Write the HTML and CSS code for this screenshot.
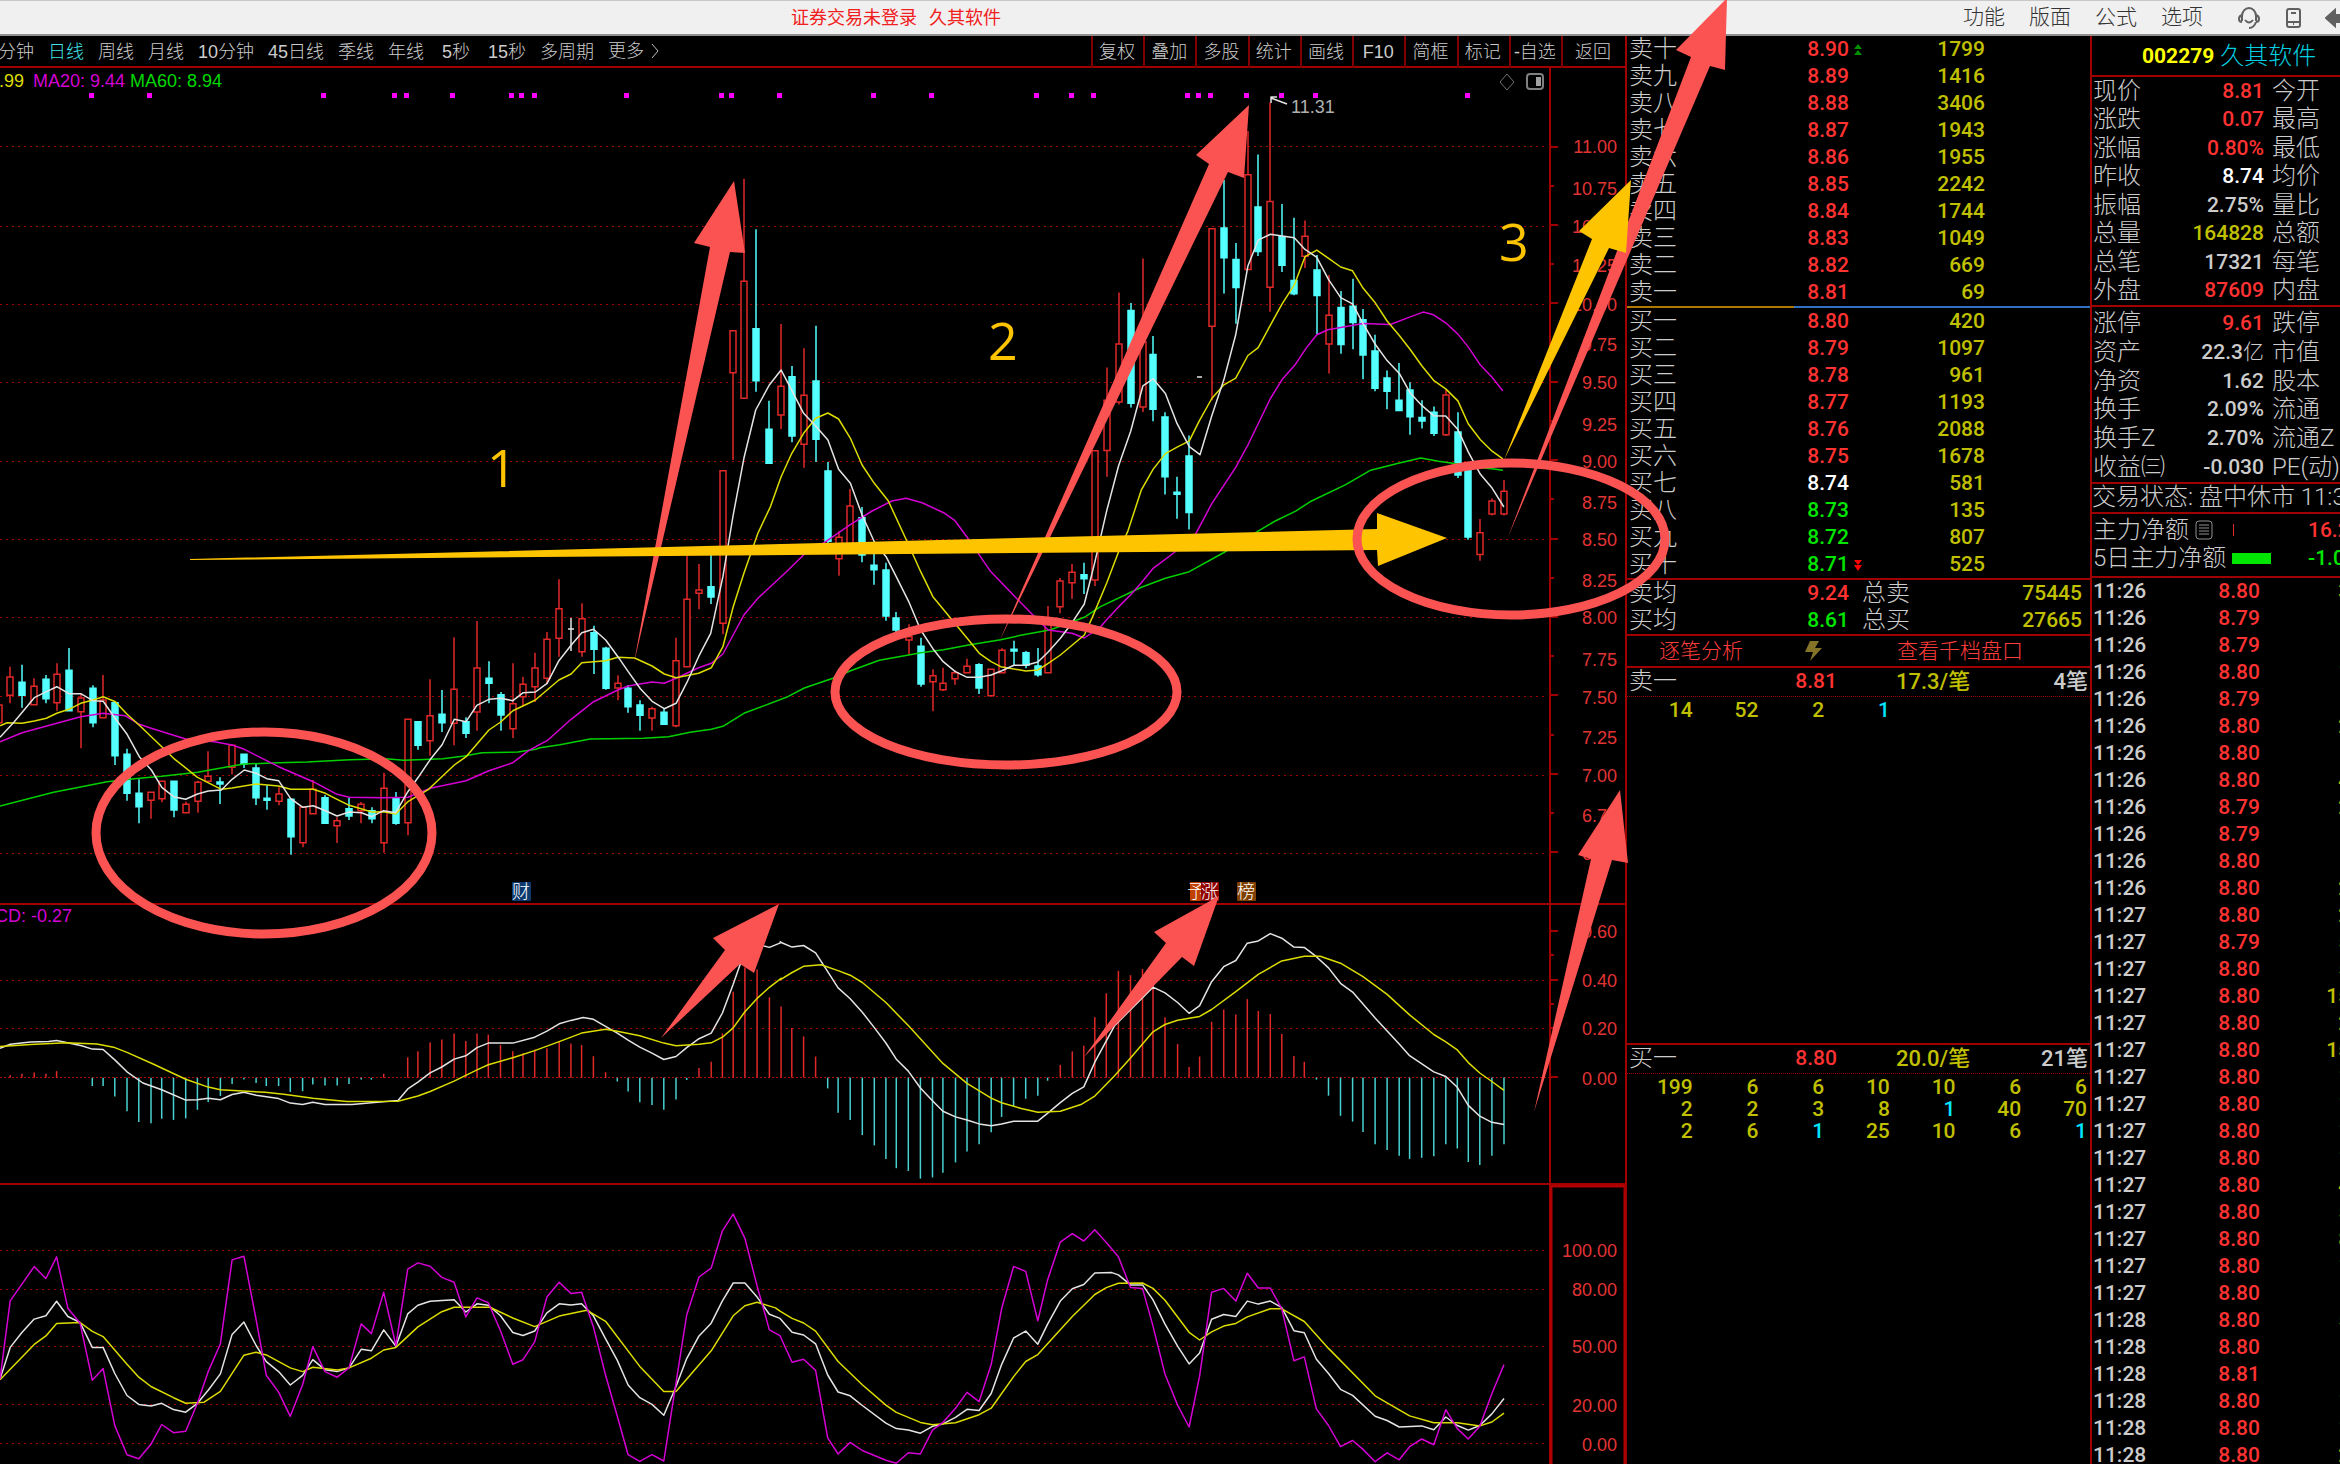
FILE: index.html
```html
<!DOCTYPE html>
<html lang="zh-CN">
<head>
<meta charset="utf-8">
<title>久其软件 002279</title>
<link rel="stylesheet" href="styles.css">
</head>
<body>
<div class="app">
  <header class="topbar">
    <p class="login"><span>证券交易未登录</span><span>久其软件</span></p>
    <nav class="menu">
      <button>功能</button><button>版面</button><button>公式</button><button>选项</button>
      <span class="icons">
        <button class="icon" aria-label="客服"><svg width="24" height="24" viewBox="0 0 24 24"><path d="M5 15V10a7 8 0 0 1 14 0v5M5 9q-3 1-3 4 0 3 3 3M19 9q3 1 3 4 0 3-3 3M19 16q-2 6-7 6M8 14q4 5 8 0"/></svg></button>
        <button class="icon" aria-label="手机"><svg width="24" height="24" viewBox="0 0 24 24"><rect x="6" y="3" width="13" height="18" rx="2"/><path d="M6 16h13M12 18h1M10 7h5"/></svg></button>
        <button class="icon" aria-label="更多"><svg width="24" height="24" viewBox="0 0 24 24"><path class="solid" d="M1 12 10 4v5h13v7H10v4z"/></svg></button>
      </span>
    </nav>
  </header>
  <main class="workspace">
    <section class="charts">
      <div class="toolbar">
        <nav class="periods">
          <button>分钟</button><button class="active">日线</button><button>周线</button><button>月线</button><button>10分钟</button><button>45日线</button><button>季线</button><button>年线</button><button>5秒</button><button>15秒</button><button>多周期</button><button class="more">更多<svg width="10" height="16" viewBox="0 0 10 16"><path d="M2 1l6 7-6 7"/></svg></button>
        </nav>
        <nav class="tools">
          <button>复权</button><button>叠加</button><button>多股</button><button>统计</button><button>画线</button><button>F10</button><button>简框</button><button>标记</button><button>-自选</button><button>返回</button>
        </nav>
      </div>
      <svg class="chart" id="chart" viewBox="0 68 1625 1396" role="img" aria-label="日K线、MACD、KDJ"></svg>
    </section>

    <section class="book">
      <table class="levels">
        <tr><th>卖十</th><td class="up">8.90</td><td class="mark"><svg width="8" height="12" viewBox="0 0 8 12" fill="#009000"><path d="M4 0l4 5H0zM4 6l4 5H0z"/></svg></td><td class="vol">1799</td><td></td></tr>
        <tr><th>卖九</th><td class="up">8.89</td><td></td><td class="vol">1416</td><td></td></tr>
        <tr><th>卖八</th><td class="up">8.88</td><td></td><td class="vol">3406</td><td></td></tr>
        <tr><th>卖七</th><td class="up">8.87</td><td></td><td class="vol">1943</td><td></td></tr>
        <tr><th>卖六</th><td class="up">8.86</td><td></td><td class="vol">1955</td><td></td></tr>
        <tr><th>卖五</th><td class="up">8.85</td><td></td><td class="vol">2242</td><td></td></tr>
        <tr><th>卖四</th><td class="up">8.84</td><td></td><td class="vol">1744</td><td></td></tr>
        <tr><th>卖三</th><td class="up">8.83</td><td></td><td class="vol">1049</td><td></td></tr>
        <tr><th>卖二</th><td class="up">8.82</td><td></td><td class="vol">669</td><td></td></tr>
        <tr><th>卖一</th><td class="up">8.81</td><td></td><td class="vol">69</td><td></td></tr>
      </table>
      <div class="balance"><span style="width:36%"></span></div>
      <table class="levels">
        <tr><th>买一</th><td class="up">8.80</td><td></td><td class="vol">420</td><td></td></tr>
        <tr><th>买二</th><td class="up">8.79</td><td></td><td class="vol">1097</td><td></td></tr>
        <tr><th>买三</th><td class="up">8.78</td><td></td><td class="vol">961</td><td></td></tr>
        <tr><th>买四</th><td class="up">8.77</td><td></td><td class="vol">1193</td><td></td></tr>
        <tr><th>买五</th><td class="up">8.76</td><td></td><td class="vol">2088</td><td></td></tr>
        <tr><th>买六</th><td class="up">8.75</td><td></td><td class="vol">1678</td><td></td></tr>
        <tr><th>买七</th><td class="flat">8.74</td><td></td><td class="vol">581</td><td></td></tr>
        <tr><th>买八</th><td class="down">8.73</td><td></td><td class="vol">135</td><td></td></tr>
        <tr><th>买九</th><td class="down">8.72</td><td></td><td class="vol">807</td><td></td></tr>
        <tr><th>买十</th><td class="down">8.71</td><td class="mark"><svg width="8" height="12" viewBox="0 0 8 12" fill="#ff0000"><path d="M0 1h8L4 6zM0 6h8l-4 6z"/></svg></td><td class="vol">525</td><td></td></tr>
      </table>
      <table class="levels totals">
        <tr><th>卖均</th><td class="up">9.24</td><td></td><th>总卖</th><td class="vol">75445</td></tr>
        <tr><th>买均</th><td class="down">8.61</td><td></td><th>总买</th><td class="vol">27665</td></tr>
      </table>
      <div class="links">
        <a href="#">逐笔分析</a>
        <svg width="18" height="20" viewBox="0 0 18 20"><path fill="#857328" d="M6 0h9l-4 7h7L6 20l3-9H1z"/></svg>
        <a href="#">查看千档盘口</a>
      </div>
      <div class="queue queue-sell">
        <div class="queue-head"><span>卖一</span><b class="up">8.81</b><span class="avg">17.3/笔</span><span class="count">4笔</span></div>
        <table class="orders">
          <tr><td>14</td><td>52</td><td>2</td><td class="one">1</td><td></td><td></td><td></td></tr>
        </table>
      </div>
      <div class="queue queue-buy">
        <div class="queue-head"><span>买一</span><b class="up">8.80</b><span class="avg">20.0/笔</span><span class="count">21笔</span></div>
        <table class="orders">
          <tr><td>199</td><td>6</td><td>6</td><td>10</td><td>10</td><td>6</td><td>6</td></tr>
          <tr><td>2</td><td>2</td><td>3</td><td>8</td><td class="one">1</td><td>40</td><td>70</td></tr>
          <tr><td>2</td><td>6</td><td class="one">1</td><td>25</td><td>10</td><td>6</td><td class="one">1</td></tr>
        </table>
      </div>
    </section>

    <aside class="quote">
      <h1><b>002279</b><span>久其软件</span></h1>
      <div class="stats stats-a">
        <div><span>现价</span><b class="up">8.81</b><span>今开</span></div>
        <div><span>涨跌</span><b class="up">0.07</b><span>最高</span></div>
        <div><span>涨幅</span><b class="up">0.80%</b><span>最低</span></div>
        <div><span>昨收</span><b class="flat">8.74</b><span>均价</span></div>
        <div><span>振幅</span><b>2.75%</b><span>量比</span></div>
        <div><span>总量</span><b class="vol">164828</b><span>总额</span></div>
        <div><span>总笔</span><b>17321</b><span>每笔</span></div>
        <div><span>外盘</span><b class="up">87609</b><span>内盘</span></div>
      </div>
      <div class="stats stats-b">
        <div><span>涨停</span><b class="up">9.61</b><span>跌停</span></div>
        <div><span>资产</span><b>22.3<i>亿</i></b><span>市值</span></div>
        <div><span>净资</span><b>1.62</b><span>股本</span></div>
        <div><span>换手</span><b>2.09%</b><span>流通</span></div>
        <div><span>换手Z</span><b>2.70%</b><span>流通Z</span></div>
        <div><span>收益㈢</span><b>-0.030</b><span>PE(动)</span></div>
      </div>
      <p class="status">交易状态: 盘中休市 11:30</p>
      <div class="flows">
        <div><span>主力净额</span><svg width="18" height="20" viewBox="0 0 18 20" fill="none" stroke="#909090"><rect x="1" y="1" width="16" height="18" rx="3"/><path d="M4 5h10M4 8h10M4 11h10M4 14h10"/></svg><i class="tick"></i><b class="up">16.2万</b></div>
        <div><span>5日主力净额</span><i class="bar"></i><b class="down">-1.01</b></div>
      </div>
      <table class="ticks">
        <tr><td>11:26</td><td class="up">8.80</td><td class="vol">30</td></tr>
        <tr><td>11:26</td><td class="up">8.79</td><td class="vol">4</td></tr>
        <tr><td>11:26</td><td class="up">8.79</td><td class="vol">6</td></tr>
        <tr><td>11:26</td><td class="up">8.80</td><td class="vol">10</td></tr>
        <tr><td>11:26</td><td class="up">8.79</td><td class="vol">5</td></tr>
        <tr><td>11:26</td><td class="up">8.80</td><td class="vol">22</td></tr>
        <tr><td>11:26</td><td class="up">8.80</td><td class="vol">3</td></tr>
        <tr><td>11:26</td><td class="up">8.80</td><td class="vol">40</td></tr>
        <tr><td>11:26</td><td class="up">8.79</td><td class="vol">20</td></tr>
        <tr><td>11:26</td><td class="up">8.79</td><td class="vol">8</td></tr>
        <tr><td>11:26</td><td class="up">8.80</td><td class="vol">5</td></tr>
        <tr><td>11:26</td><td class="up">8.80</td><td class="vol">20</td></tr>
        <tr><td>11:27</td><td class="up">8.80</td><td class="vol">20</td></tr>
        <tr><td>11:27</td><td class="up">8.79</td><td class="vol">50</td></tr>
        <tr><td>11:27</td><td class="up">8.80</td><td class="vol">50</td></tr>
        <tr><td>11:27</td><td class="up">8.80</td><td class="vol">150</td></tr>
        <tr><td>11:27</td><td class="up">8.80</td><td class="vol">20</td></tr>
        <tr><td>11:27</td><td class="up">8.80</td><td class="vol">150</td></tr>
        <tr><td>11:27</td><td class="up">8.80</td><td class="vol">10</td></tr>
        <tr><td>11:27</td><td class="up">8.80</td><td class="vol">10</td></tr>
        <tr><td>11:27</td><td class="up">8.80</td><td class="vol">10</td></tr>
        <tr><td>11:27</td><td class="up">8.80</td><td class="vol">10</td></tr>
        <tr><td>11:27</td><td class="up">8.80</td><td class="vol">40</td></tr>
        <tr><td>11:27</td><td class="up">8.80</td><td class="vol">50</td></tr>
        <tr><td>11:27</td><td class="up">8.80</td><td class="vol">80</td></tr>
        <tr><td>11:27</td><td class="up">8.80</td><td class="vol">10</td></tr>
        <tr><td>11:27</td><td class="up">8.80</td><td class="vol">5</td></tr>
        <tr><td>11:28</td><td class="up">8.80</td><td class="vol">50</td></tr>
        <tr><td>11:28</td><td class="up">8.80</td><td class="vol">5</td></tr>
        <tr><td>11:28</td><td class="up">8.81</td><td class="vol">6</td></tr>
        <tr><td>11:28</td><td class="up">8.80</td><td class="vol">10</td></tr>
        <tr><td>11:28</td><td class="up">8.80</td><td class="vol">10</td></tr>
        <tr><td>11:28</td><td class="up">8.80</td><td class="vol">20</td></tr>
      </table>
    </aside>
  </main>

  <svg class="notes" viewBox="0 0 2340 1464" aria-hidden="true">
    <g class="note-red">
      <path d="M734 181L694 243 710 247 634 663 730 252 745 253z"/>
      <path d="M1249 105L1196 155 1209 164 999 642 1228 172 1244 178z"/>
      <path d="M1727 -2L1676 50 1691 57 1508 537 1710 66 1725 70z"/>
      <path d="M779 904L713 938 725 950 661 1038 740 964 754 973z"/>
      <path d="M1219 896L1154 932 1166 943 1084 1057 1182 957 1194 966z"/>
      <path d="M1620 790L1578 855 1591 859 1534 1112 1612 860 1628 863z"/>
    </g>
    <g class="note-gold">
      <path d="M1631 180L1579 231 1592 239 1504 460 1609 248 1626 253z"/>
      <path d="M190 559L1377 529 1377 513 1447 538 1378 566 1377 550 190 560z"/>
      <text x="487" y="487">1</text>
      <text x="988" y="360">2</text>
      <text x="1499" y="261">3</text>
    </g>
    <g class="note-ring">
      <ellipse cx="264" cy="833" rx="168" ry="101"/>
      <ellipse cx="1006" cy="692" rx="171" ry="73"/>
      <ellipse cx="1511" cy="539" rx="154" ry="76"/>
    </g>
  </svg>
</div>
<script src="charts.js"></script>
</body>
</html>
```
FILE: styles.css
```css
* { box-sizing: border-box; }
body {
  margin: 0;
  background: #000;
  color: #cccccc;
  font: 300 24px/27px Roboto, "Noto Sans CJK SC", sans-serif;
}
button {
  background: none;
  border: 0;
  padding: 0;
  color: inherit;
  font: inherit;
  white-space: nowrap;
}
a { color: inherit; text-decoration: none; }
table { border-collapse: collapse; table-layout: fixed; width: 100%; }
th, td { padding: 0; font-weight: inherit; }
.app { position: relative; height: 100vh; overflow: hidden; display: flex; flex-direction: column; }
.up { color: #ff3232; }
.down { color: #00e600; }
.flat { color: #fff; }
.vol { color: #c0c000; }

.topbar {
  display: grid;
  grid-template-columns: 1fr auto;
  align-items: center;
  height: 36px;
  background: #f0f0f0;
  border-top: 1px solid #c8c8c8;
  border-bottom: 2px solid #909090;
}
.login {
  margin: 0;
  padding-left: 791px;
  display: flex;
  gap: 12px;
  color: #f02020;
  font-size: 18px;
  font-weight: 400;
}
.menu { display: flex; align-items: center; gap: 24px; width: 377px; color: #333; font-size: 21px; }
.icons { display: flex; gap: 20px; padding-left: 10px; }
.menu .icon { flex: none; height: 24px; }
.menu svg { display: block; fill: none; stroke: #606060; stroke-width: 2; }
.menu .solid { fill: #606060; }

.workspace { flex: 1; min-height: 0; display: grid; grid-template-columns: minmax(0, 1fr) 465px 250px; }

.toolbar {
  display: flex;
  justify-content: space-between;
  height: 32px;
  border-bottom: 2px solid #a00000;
  font: 300 18px/32px "Liberation Sans", "Noto Sans CJK SC", sans-serif;
}
.periods { display: flex; gap: 14px; margin-left: -2px; }
.periods button { min-width: 36px; }
.periods .active { color: #40e0e8; }
.periods .more { display: flex; align-items: center; gap: 6px; }
.periods .more svg { fill: none; stroke: #c0c0c0; stroke-width: 1; }
.tools { display: grid; grid-template-columns: repeat(9, minmax(52px, 1fr)) 64px; width: 534px; }
.tools button { border-left: 2px solid #800000; padding-right: 2px; }

.charts { min-width: 0; }
.chart { display: block; width: 100%; height: auto; font-family: "Liberation Sans", "Noto Sans CJK SC", sans-serif; font-size: 18px; }
.frame { fill: none; stroke: #a00000; stroke-width: 2; }
.frame-focus { fill: none; stroke: #b00000; stroke-width: 3; }
.grid { stroke: #a00000; stroke-width: 1; stroke-dasharray: 2 4; }
.grid-zero { stroke: #b00000; stroke-width: 1; stroke-dasharray: 2 2; }
.scale { fill: #e03434; text-anchor: end; }
.line { fill: none; stroke-width: 1.5; stroke-linejoin: round; }
.white { stroke: #e4e4e4; }
.yellow { stroke: #dcdc00; }
.magenta { stroke: #d400d4; }
.green { stroke: #00d000; }
.rise { fill: #000; stroke: #e02828; stroke-width: 1.5; }
.fall { fill: #54ffff; stroke: #54ffff; stroke-width: 1.5; }
.still { stroke: #e4e4e4; stroke-width: 1.5; }
.macd-rise { stroke: #e02828; stroke-width: 1.5; }
.macd-fall { stroke: #48d0d0; stroke-width: 1.5; }
.event { fill: #ff00ff; }
.tag { fill: #fff; }

.book, .quote { border-left: 2px solid #a00000; overflow: hidden; font-size: 24px; }
.book { display: flex; flex-direction: column; }
.levels tr { height: 27px; }
.levels th { width: 100px; padding-left: 2px; text-align: left; }
.levels td:nth-child(2) { width: 122px; }
.levels td:nth-child(3) { width: 13px; }
.levels td:nth-child(4) { width: 123px; }
.levels td, .orders td, .ticks td { text-align: right; font-size: 21px; font-weight: 500; line-height: 27px; }
.levels .mark svg { display: block; margin-left: 5px; }
.balance { height: 2px; background: #3070c0; }
.balance span { display: block; height: 2px; background: #b07800; }
.totals { border-top: 2px solid #a00000; }
.totals td:last-child { padding-right: 8px; }
.levels.totals th:nth-child(4) { width: 60px; padding-left: 0; }
.links {
  display: grid;
  grid-template-columns: 145px 93px 1fr;
  align-items: center;
  padding-left: 32px;
  height: 34px;
  border-top: 2px solid #a00000;
  border-bottom: 2px solid #a00000;
  color: #ff3c3c;
  font-size: 21px;
}
.queue { min-height: 0; }
.queue-sell { flex: 376 1 0; }
.queue-buy { flex: 420 1 0; border-top: 2px solid #a00000; }
.queue-head {
  display: grid;
  grid-template-columns: 100px 108px 59px 102px 1fr;
  height: 29px;
  padding: 0 2px;
  border-bottom: 1px dotted #a00000;
}
.queue-head b { font-size: 21px; font-weight: 500; text-align: right; }
.avg { grid-column: 4; color: #c0c000; font-size: 22px; font-weight: 500; }
.count { font-size: 22px; text-align: right; font-weight: 500; }
.orders td { color: #c0c000; line-height: 22px; }
.orders .one { color: #00e5ff; }
.orders { width: 460px; margin-top: 2px; }

.quote { white-space: nowrap; display: flex; flex-direction: column; }
.quote > * { flex: none; }
.quote h1 {
  display: flex;
  gap: 6px;
  margin: 0;
  padding-left: 50px;
  height: 41px;
  line-height: 40px;
  border-bottom: 2px solid #a00000;
  font-size: 24px;
  font-weight: 300;
  color: #00d0e0;
}
.quote h1 b { color: #ffff00; font-size: 21px; font-weight: 700; }
.stats { display: grid; align-content: stretch; border-bottom: 2px solid #a00000; }
.stats-a { height: 230px; }
.stats-b { height: 177px; padding-top: 2px; }
.stats div { display: grid; grid-template-columns: 80px 91px 1fr; padding-left: 1px; align-items: center; }
.stats span:last-child { padding-left: 8px; }
.stats b { text-align: right; font-size: 21px; font-weight: 500; }
.stats i { font-style: normal; font-weight: 300; }
.status { margin: 0; height: 30px; border-bottom: 2px solid #a00000; }
.flows { height: 64px; padding: 2px 0 0 1px; border-bottom: 2px solid #a00000; }
.flows div { display: flex; align-items: center; height: 28px; }
.flows svg { margin-left: 6px; }
.flows b { margin-left: auto; flex: 0 0 32px; min-width: 0; font-size: 21px; font-weight: 500; }
.tick { width: 1px; height: 12px; margin-left: 20px; background: #e02828; }
.bar { width: 39px; height: 11px; margin-left: 6px; background: #00e600; }
.ticks { width: 270px; }
.ticks tr { height: 27px; }
.ticks td:first-child { width: 60px; padding-left: 1px; text-align: left; }
.ticks td:nth-child(2) { width: 108px; }

.notes { position: absolute; top: 0; left: 0; width: 100%; pointer-events: none; }
.note-red { fill: #fb5252; }
.note-gold { fill: #ffc400; font: 52px "Open Sans", sans-serif; }
.note-ring { fill: none; stroke: #fb5252; stroke-width: 9; }
```
FILE: charts.js
```js
const svg = document.getElementById('chart');
const NS = 'http://www.w3.org/2000/svg';

function add(name, attrs, text) {
  const el = document.createElementNS(NS, name);
  for (const key in attrs) el.setAttribute(key, attrs[key]);
  if (text) el.textContent = text;
  svg.appendChild(el);
}

// Each block of samples has its own origin and resolution.
const px = (b, x) => Math.round((b.x + x / b.sx) * 10) / 10;
const py = (b, y) => Math.round((b.y + y / b.sy) * 10) / 10;
const K1 = { x: 0, y: 540, sx: 2.8, sy: 3 };
const K2 = { x: 540, y: 400, sx: 2.8, sy: 3 };
const K3 = { x: 1060, y: 80, sx: 2.8, sy: 2.904 };
const M1 = { x: 0, y: 880, sx: 1.96, sy: 2.685 };
const M2 = { x: 780, y: 860, sx: 1.8233, sy: 2.596 };

function line(color, parts) {
  const pts = parts.map(([b, s]) => s.split(' ').map(p => {
    const [x, y] = p.split(',').map(Number);
    return px(b, x) + ',' + py(b, y);
  }).join(' ')).join(' ');
  add('polyline', { class: 'line ' + color, points: pts });
}

// Grid, frames and scales
[146, 226, 304, 382, 461, 539, 617, 696, 775, 853, 980, 1028, 1250, 1289, 1346, 1404, 1443].forEach(y => {
  add('path', { class: 'grid', d: `M0 ${y}.5H1544` });
});
add('path', { class: 'grid-zero', d: 'M0 1077.5H1549' });
for (let i = 0; i < 19; i++) {
  const y = Math.round(146.5 + i * 39.2);
  add('path', { class: 'frame', d: `M1550 ${y}h${i % 2 ? 4 : 8}` });
}
[931, 955, 980, 1004, 1028, 1077].forEach((y, i) => add('path', { class: 'frame', d: `M1550 ${y}h${i % 2 && i < 5 ? 4 : 8}` }));
add('path', { class: 'frame', d: 'M0 904H1626M0 1184H1626M1550 68V1464' });
add('path', { class: 'frame-focus', d: 'M1551 1464V1186H1625V1464' });
[['11.00', 146], ['10.75', 188], ['10.50', 226], ['10.25', 265], ['10.00', 304], ['9.75', 344], ['9.50', 382], ['9.25', 424],
 ['9.00', 461], ['8.75', 502], ['8.50', 539], ['8.25', 580], ['8.00', 617], ['7.75', 659], ['7.50', 697], ['7.25', 737],
 ['7.00', 775], ['6.75', 815], ['6.50', 853], ['0.60', 931], ['0.40', 980], ['0.20', 1028], ['0.00', 1078],
 ['100.00', 1250], ['80.00', 1289], ['50.00', 1346], ['20.00', 1405], ['0.00', 1444]].forEach(([t, y]) =>
  add('text', { class: 'scale', x: 1617, y: y + 7 }, t));

// Indicator captions
add('text', { x: 24, y: 87, 'text-anchor': 'end', fill: '#dcdc00' }, '.99');
add('text', { x: 33, y: 87, fill: '#d400d4' }, 'MA20: 9.44');
add('text', { x: 130, y: 87, fill: '#00d800' }, 'MA60: 8.94');
add('text', { x: 72, y: 922, 'text-anchor': 'end', fill: '#d400d4' }, 'CD: -0.27');
add('path', { d: 'M1507 74l7 8-7 8-7-8z', fill: 'none', stroke: '#707070' });
add('rect', { x: 1527, y: 74, width: 16, height: 15, rx: 3, fill: 'none', stroke: '#808080', 'stroke-width': 2 });
add('rect', { x: 1536, y: 77, width: 5, height: 9, fill: '#a0a0a0' });

[91, 149, 323, 394, 406, 452, 511, 521, 534, 626, 721, 731, 779, 873, 931, 1036, 1071, 1093, 1187, 1198, 1210, 1246, 1281, 1315, 1467]
  .forEach(x => add('rect', { class: 'event', x: x - 2, y: 93, width: 5, height: 5 }));

// Candles: x, high, body top, body bottom, low, direction
function candles(b, rows) {
  rows.trim().split('\n').forEach(row => row.trim().split(' ').forEach(c => {
    const v = c.split(',');
    const [x, hi, t, bo, lo] = v.map(Number);
    const X = Math.round(px(b, x)), H = py(b, hi), T = py(b, t), B = py(b, bo), L = py(b, lo);
    add('path', { class: v[5] === 'r' ? 'rise' : 'fall', d: `M${X} ${H}V${T}M${X} ${B}V${L}M${X - 3} ${T}h6V${B}h-6z` });
  }));
}
candles(K1, `-3,495,495,548,548,r 29,380,411,466,490,r 62,374,427,466,503,c 96,415,439,494,494,r 130,405,418,476,490,c 159,370,403,488,512,r
193,324,391,512,512,c 226,460,474,515,625,r 260,436,445,548,562,c 289,405,480,533,533,r 323,488,488,647,675,c 356,626,643,760,782,c
390,718,760,800,850,c 424,757,757,781,836,r 453,724,724,776,787,r 486,724,724,810,832,c 520,785,793,818,818,r 553,722,727,784,818,r
583,634,709,724,724,r 617,712,726,732,792,c 650,616,616,682,703,r 684,643,643,672,684,c 718,672,684,773,795,c 747,736,775,781,809,c
780,742,762,784,796,r 814,778,778,890,944,c 848,800,802,908,922,r 877,720,748,821,821,r 911,765,773,850,850,c 944,832,842,857,909,r
978,773,806,828,840,c 1012,786,793,812,850,r 1041,802,812,836,850,c 1074,698,745,908,938,r 1108,756,776,850,854,c 1142,538,538,848,886,r
1171,545,545,616,629,c 1205,418,527,602,647,r 1238,450,523,548,576,c 1272,292,448,550,616,r 1305,532,545,580,594,c 1335,243,384,516,572,r
1369,364,415,430,490,c 1402,456,464,525,572,c 1436,370,491,566,594,r 1465,410,433,470,498,r 1499,338,384,440,486,r 1532,276,298,415,432,r`);
candles(K2, `53,538,626,715,770,r 117,610,656,755,770,r 150,677,698,748,822,c 184,740,745,865,869,c 218,826,850,864,901,r 247,855,865,920,938,c
281,901,915,946,992,c 314,920,926,954,992,r 348,924,937,973,973,c 381,713,782,977,982,r 411,465,598,800,800,r 444,492,570,580,628,r
478,462,560,591,612,c 512,212,212,670,703,r 541,-208,-208,-82,180,r 571,-664,-356,-5,-5,r 604,-512,-214,-58,-25,c 642,2,88,190,190,c
675,-228,-41,45,87,r 705,-102,-70,108,127,c 738,-155,-14,133,203,r 772,-223,-57,118,186,c 806,186,213,424,435,c 836,393,412,476,527,r
869,267,318,440,440,r 902,321,353,465,487,c 936,440,496,509,554,c 969,488,510,648,662,c 998,636,654,690,700,c 1032,673,710,720,762,r
1066,713,739,852,860,c 1100,808,827,845,934,r 1129,803,850,869,873,r 1162,810,818,836,854,r 1196,776,799,818,818,r 1230,790,794,864,882,c
1263,808,808,887,887,r 1293,745,751,818,818,r 1327,722,748,753,795,c 1360,753,758,796,805,c 1394,744,798,824,830,c 1423,618,672,818,818,r
1457,534,543,620,640,r 1490,492,517,548,596,r 1524,488,524,536,582,c 1553,152,152,540,558,r`);
candles(K3, `131,835,930,1076,1152,r 164,617,767,935,942,r 198,648,669,939,951,c 232,518,760,950,964,r 261,743,797,956,991,c 295,965,979,1152,1204,c
328,1152,1197,1203,1274,c 362,1032,1092,1256,1305,c 425,432,432,715,930,r 459,290,430,516,620,c 492,473,521,603,708,c 526,148,275,550,550,r
555,216,369,498,511,c 589,65,353,602,673,r 622,360,455,538,558,c 656,400,582,621,625,c 686,408,454,512,546,r 719,508,552,626,740,c
752,566,683,767,852,r 786,613,661,768,795,c 819,577,657,704,782,c 849,665,696,799,869,c 883,740,787,895,904,c 916,844,865,904,956,c
950,822,930,960,960,c 980,878,900,978,1030,c 1013,930,980,990,1012,c 1046,948,965,1026,1034,c 1080,900,915,1030,1034,r 1114,965,1022,1147,1156,c
1143,1130,1130,1327,1335,c 1177,1275,1315,1378,1396,r 1210,1215,1223,1260,1265,r 1243,1162,1194,1260,1265,r`);
add('path', { class: 'still', d: 'M571 618V651M568 629h6M1197 377h5' });

// Moving averages
line('green', [
  [K1, '0,798 150,757 300,725 390,715 453,709 553,697 650,678 684,672 780,668 860,666 980,659 1080,656 1130,661 1205,658 1240,656 1300,648 1350,638 1450,636 1500,628'],
  [K2, '0,1043 56,1034 140,1017 290,1015 360,1010 420,997 480,988 512,979 571,940 690,892 740,864 820,835 870,812 950,781 1032,765 1066,758 1130,749 1200,735 1290,719 1350,705 1430,689 1524,652'],
  [K3, '112,1530 228,1473 295,1447 362,1428 459,1372 555,1310 600,1282 660,1252 700,1225 800,1175 870,1133 950,1112 1010,1098 1060,1107 1114,1115 1170,1125 1210,1129 1240,1133']]);
line('magenta', [
  [K1, '0,605 62,578 159,550 226,530 289,520 350,527 390,553 430,567 520,597 600,605 650,615 684,628 780,680 877,725 944,763 978,772 1074,773 1142,772 1205,745 1305,722 1369,692 1436,668 1480,632'],
  [K2, '0,1033 20,1022 87,958 150,905 218,870 247,858 314,846 348,850 381,835 444,803 480,790 512,762 571,645 610,595 690,515 740,463 800,425 870,373 930,333 985,303 1025,295 1070,308 1130,338 1162,362 1200,418 1260,512 1330,590 1380,645 1423,690 1490,700 1524,714'],
  [K3, '112,1590 130,1568 164,1530 198,1495 228,1460 261,1418 320,1372 380,1318 425,1230 492,1125 526,1060 589,925 622,870 656,830 690,778 719,740 750,725 849,707 925,710 975,690 1017,674 1046,682 1080,705 1114,738 1143,775 1177,828 1210,863 1240,903']]);
line('yellow', [
  [K1, '0,557 20,548 62,550 96,543 130,535 159,520 193,508 226,490 260,480 289,470 323,485 356,523 390,556 453,620 486,655 553,712 620,748 650,744 718,732 780,738 814,748 877,748 911,760 944,778 978,796 1041,816 1074,815 1108,822 1142,785 1200,748 1272,675 1305,650 1369,570 1402,546 1436,512 1499,480'],
  [K2, '0,888 53,840 87,822 117,788 184,782 218,772 265,774 314,798 348,822 381,833 444,820 480,803 512,740 541,620 571,520 610,400 645,320 675,230 705,160 738,100 772,55 806,39 836,57 869,115 902,195 936,250 975,302 1030,430 1066,515 1100,590 1150,655 1200,720 1230,760 1263,785 1290,800 1360,813 1394,810 1423,790 1457,765 1524,705'],
  [K3, '90,1562 131,1460 164,1370 190,1310 228,1190 261,1130 295,1085 328,1066 362,1048 390,990 425,925 459,885 492,866 526,800 555,777 589,712 622,650 656,595 686,513 719,494 752,518 786,543 819,554 849,605 883,648 916,700 950,742 980,782 1013,830 1046,872 1080,897 1114,932 1143,998 1177,1045 1210,1078 1240,1100']]);
line('white', [
  [K1, '0,592 40,545 96,473 130,455 159,440 193,461 226,461 260,482 289,484 323,536 356,583 390,650 424,690 453,742 486,770 520,778 553,762 583,753 620,750 650,718 684,690 718,700 747,716 780,722 814,776 848,802 877,797 911,812 944,828 978,816 1012,818 1041,830 1074,812 1108,818 1142,755 1171,712 1205,658 1238,614 1272,538 1305,545 1335,496 1369,478 1402,475 1436,482 1465,458 1499,456 1532,430'],
  [K2, '53,782 87,736 117,698 150,688 184,720 218,770 247,815 281,866 314,904 348,926 381,910 411,848 444,770 478,700 512,530 541,345 571,175 604,30 642,-45 675,-90 695,-50 738,40 772,78 806,120 836,208 869,250 902,345 936,425 969,470 1000,535 1032,604 1066,690 1100,746 1129,785 1162,814 1196,832 1230,832 1263,825 1293,812 1327,796 1360,796 1394,786 1423,756 1457,715 1490,668 1524,612'],
  [K3, '97,1403 131,1250 164,1120 198,1020 232,888 261,868 295,910 328,998 362,1065 392,1088 425,975 459,870 492,740 526,540 555,465 589,448 622,453 656,458 686,492 719,515 752,580 786,632 819,650 849,708 883,768 916,815 950,852 980,908 1013,945 1046,975 1080,976 1114,1015 1143,1080 1177,1145 1210,1185 1243,1240']]);
add('text', { x: 1291, y: 113, fill: '#b0b0b0' }, '11.31');
add('path', { class: 'line white', d: 'M1287 104l-16-6m6-1h-6v6' });

// Event tags
[['财', 512, 19, '#0c3a6e'], ['予', 1190, 11, '#c04000'], ['涨', 1201, 18, '#900000'], ['榜', 1237, 19, '#804000']].forEach(([t, x, w, c]) => {
  add('rect', { x: x, y: 882, width: w, height: 19, rx: 1, fill: c });
  add('text', { class: 'tag', x: w < 18 ? x - 3 : x, y: 898 }, t);
});

// MACD histogram: x, end
function bars(cls, b, zero, list) {
  list.split(' ').forEach(p => {
    const [x, y] = p.split(',').map(Number);
    add('path', { class: cls, d: `M${px(b, x)} ${py(b, zero)}V${py(b, y)}` });
  });
}
bars('macd-rise', M1, 531, '20,524 43,520 67,517 90,520 111,513 752,520 799,476 819,460 843,436 866,428 890,412 913,432 935,412 957,415 981,443 1005,460 1025,465 1048,455 1072,452 1096,432 1119,439 1140,443 1163,473 1187,516 1370,505 1394,488 1416,412 1437,300 1460,235 1484,240 1508,315 1531,340 1552,397');
bars('macd-fall', M1, 531, '181,553 202,553 225,581 249,621 272,650 296,653 317,641 340,644 364,640 387,617 408,596 432,580 455,548 478,536 502,545 522,553 546,553 569,569 593,567 613,549 637,552 661,552 684,548 708,536 728,536 1210,541 1231,568 1254,597 1278,604 1301,617 1325,589 1346,537');
bars('macd-rise', M2, 565, '43,458 65,510 511,532 533,497 554,482 574,408 595,346 617,288 639,299 661,283 680,320 702,408 725,478 746,537 765,510 787,420 809,388 831,401 852,361 872,392 894,400 915,452 937,509 956,524');
bars('macd-fall', M2, 565, '87,593 106,656 128,675 150,714 172,741 193,776 212,800 234,807 256,827 278,824 297,812 320,785 341,757 363,738 385,707 404,667 426,640 448,620 470,612 488,573 978,570 1000,612 1022,664 1044,679 1063,706 1085,738 1107,753 1129,768 1148,776 1170,773 1192,769 1214,738 1235,749 1255,784 1276,792 1298,768 1320,738');
line('white', [
  [M1, '0,452 20,441 60,435 95,434 111,431 130,436 160,445 181,454 202,455 225,483 249,515 280,545 317,563 364,591 387,590 408,586 432,590 455,576 478,570 502,578 546,587 569,599 593,603 613,597 637,603 690,603 728,598 780,592 800,560 819,543 843,518 866,502 890,481 913,472 935,450 957,438 1005,438 1048,422 1072,406 1096,386 1119,377 1143,369 1163,374 1187,393 1210,411 1231,430 1254,449 1278,465 1301,482 1325,474 1346,450 1370,426 1394,411 1416,357 1437,280 1460,190 1484,172 1508,181 1531,168'],
  [M2, '0,213 22,226 43,222 65,241 87,290 106,332 128,360 150,395 172,435 193,475 212,517 234,548 256,592 278,625 297,652 320,667 341,675 363,685 385,690 404,685 426,678 470,678 490,655 511,630 533,606 554,589 574,525 610,430 680,330 702,345 725,370 746,398 765,378 787,316 809,277 831,261 852,216 872,210 894,191 915,203 937,226 956,227 978,251 1000,280 1022,320 1044,343 1085,410 1129,478 1148,508 1192,550 1214,562 1235,590 1255,637 1276,665 1298,681 1320,687']]);
line('yellow', [
  [M1, '0,447 60,442 130,437 190,440 225,450 249,463 300,494 364,535 408,556 432,563 520,570 560,576 613,586 680,595 780,594 819,580 843,568 890,540 935,510 957,496 1005,477 1048,458 1096,434 1140,411 1187,401 1210,406 1254,418 1301,438 1325,445 1370,441 1394,437 1416,422 1437,397 1460,354 1484,318 1508,288 1531,264'],
  [M2, '0,311 22,292 43,276 75,272 106,287 128,299 150,318 193,370 234,430 297,528 341,580 385,618 404,630 440,645 470,655 511,652 550,634 574,613 610,560 639,514 661,478 680,446 702,427 725,416 765,406 787,388 831,342 872,297 915,262 956,250 985,250 1022,268 1063,303 1107,349 1148,402 1192,453 1214,472 1235,493 1255,526 1276,553 1298,575 1320,598']]);

// KDJ
line('white', [
  [M1, '0,1340 20,1255 43,1215 67,1179 90,1170 111,1131 133,1172 157,1188 181,1255 202,1255 225,1325 249,1384 272,1408 296,1412 317,1405 340,1422 364,1429 387,1405 408,1370 432,1326 455,1220 478,1187 502,1250 522,1293 546,1320 569,1356 593,1330 613,1288 637,1315 661,1320 684,1310 708,1260 728,1264 752,1208 776,1252 799,1165 819,1142 843,1131 890,1127 913,1160 935,1138 957,1142 981,1170 1005,1215 1025,1223 1048,1211 1072,1162 1096,1138 1119,1141 1140,1138 1163,1170 1187,1232 1210,1290 1231,1356 1254,1390 1278,1408 1301,1437 1325,1360 1346,1285 1370,1224 1394,1190 1416,1130 1437,1082 1460,1082 1484,1120 1508,1166'],
  [M2, '0,1190 22,1226 43,1233 65,1256 87,1337 106,1381 128,1391 150,1416 193,1462 212,1476 234,1480 256,1488 278,1470 297,1464 320,1447 341,1426 363,1429 385,1385 404,1310 426,1241 448,1223 470,1257 488,1205 511,1145 533,1113 554,1102 574,1072 605,1071 617,1077 639,1103 661,1103 680,1142 702,1205 725,1262 746,1308 765,1280 787,1192 809,1180 831,1185 852,1145 872,1153 894,1145 915,1162 937,1222 956,1227 978,1296 1000,1333 1022,1374 1044,1390 1085,1444 1107,1455 1129,1472 1170,1469 1192,1479 1214,1446 1235,1468 1255,1480 1276,1468 1298,1438 1320,1398']]);
line('yellow', [
  [M1, '0,1342 67,1247 90,1224 111,1191 157,1188 181,1212 202,1226 249,1300 272,1335 296,1360 340,1390 364,1405 400,1402 432,1373 478,1276 502,1268 522,1275 569,1310 593,1320 613,1308 661,1316 684,1310 728,1284 752,1262 776,1255 819,1200 866,1159 890,1147 960,1147 1005,1176 1048,1199 1096,1171 1150,1155 1187,1185 1254,1306 1301,1373 1325,1373 1394,1264 1437,1170 1460,1143 1484,1134 1520,1149'],
  [M2, '0,1171 22,1190 43,1202 65,1223 106,1302 150,1362 193,1415 212,1434 256,1460 278,1466 320,1461 363,1440 385,1423 426,1341 448,1302 470,1284 533,1185 574,1128 595,1110 617,1099 661,1098 680,1112 702,1143 746,1226 765,1246 787,1225 809,1210 831,1203 852,1186 894,1165 915,1165 956,1198 1000,1268 1085,1391 1107,1409 1148,1443 1192,1461 1235,1461 1276,1469 1298,1459 1320,1436']]);
line('magenta', [
  [M1, '0,1340 20,1130 43,1085 67,1038 90,1070 111,1012 133,1150 157,1190 181,1343 202,1312 225,1465 249,1543 272,1554 296,1515 317,1462 340,1484 364,1480 387,1405 408,1320 432,1245 455,1020 478,1010 502,1180 522,1330 546,1375 569,1440 593,1355 613,1253 637,1320 661,1335 684,1310 708,1192 728,1218 752,1107 776,1250 799,1045 819,1028 843,1037 866,1067 890,1080 913,1173 935,1122 957,1135 981,1210 1005,1300 1025,1288 1048,1240 1072,1120 1096,1080 1119,1110 1140,1107 1163,1200 1187,1330 1210,1440 1231,1543 1254,1561 1278,1543 1301,1560 1325,1350 1346,1168 1370,1066 1394,1042 1416,942 1437,897 1460,962 1484,1090 1508,1208'],
  [M2, '0,1235 22,1304 43,1296 65,1325 87,1500 106,1542 128,1512 150,1533 193,1558 212,1566 234,1539 256,1542 278,1480 297,1460 320,1423 341,1382 363,1406 385,1310 404,1165 426,1055 448,1068 470,1196 488,1090 511,992 533,970 554,989 574,960 595,993 617,1030 639,1110 661,1112 680,1210 702,1335 725,1415 746,1472 765,1340 787,1122 809,1112 831,1145 852,1073 872,1111 894,1111 915,1165 937,1300 956,1290 978,1425 1000,1468 1022,1523 1044,1507 1063,1530 1085,1562 1107,1539 1129,1557 1148,1523 1170,1503 1192,1518 1214,1427 1235,1476 1255,1503 1276,1470 1298,1385 1320,1310']]);
```
